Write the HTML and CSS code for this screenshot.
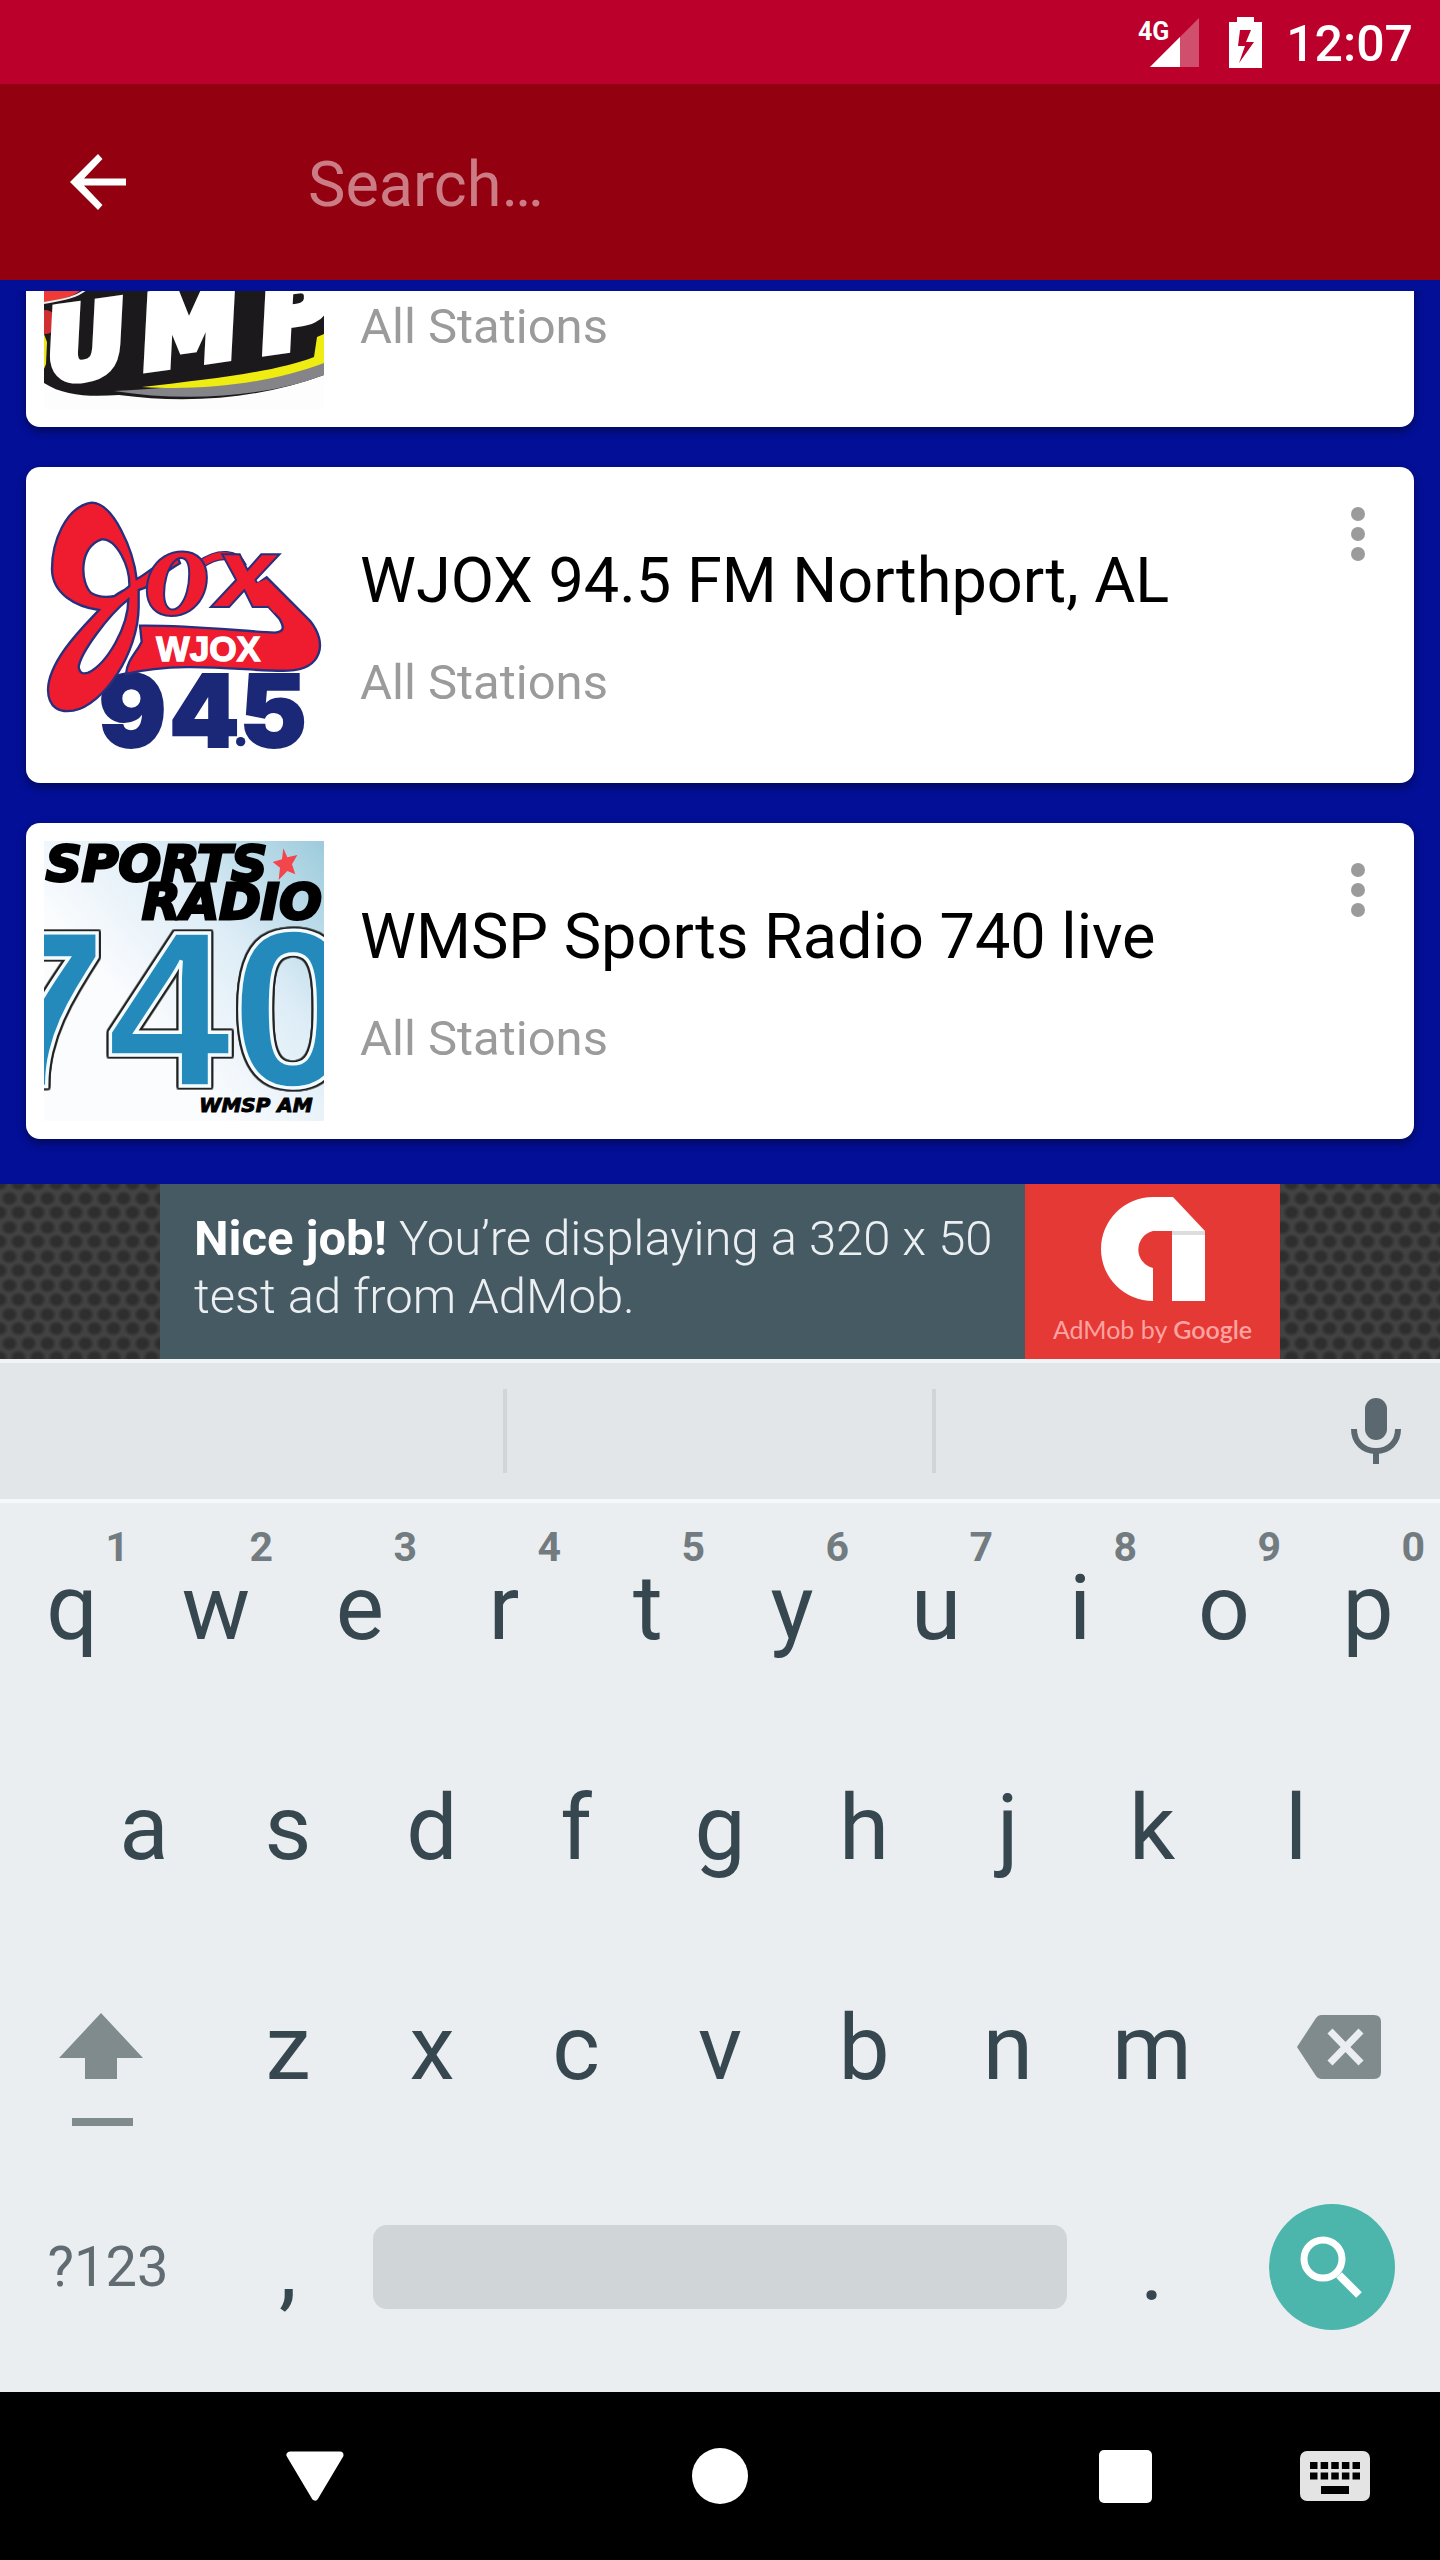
FILE: index.html
```html
<!DOCTYPE html>
<html lang="en">
<head>
  <meta charset="UTF-8">
  <meta name="viewport" content="width=device-width, initial-scale=1">
  <title>Search Stations</title>
  <link rel="stylesheet" href="styles.css">
</head>
<body>

  <!-- Status bar -->
  <div class="status-bar">
    <svg class="signal" viewBox="0 0 62 52" role="img" aria-label="4G signal">
      <path d="M12 51L61 2v49z" fill="#cf4f6d"/>
      <path d="M12 51L42 21v30z" fill="#fff"/>
      <text x="0" y="24" class="signal-text">4G</text>
    </svg>
    <svg class="battery" viewBox="0 0 33 51" role="img" aria-label="Charging">
      <path fill="#fff" fill-rule="evenodd" d="M8 0h17v5h8v46H0V5h8zM11 13L9 29h7l-6 17 15-21h-8l5-12z"/>
    </svg>
    <span class="clock">12:07</span>
  </div>

  <!-- Search toolbar -->
  <header class="toolbar">
    <button class="back" aria-label="Back">
      <svg width="56" height="56" viewBox="0 0 56 56">
        <path d="M56 24.500H14L32.500 5 28 0 0 28l28 28 4.500-5L14 31.500h42z" fill="#fff"/>
      </svg>
    </button>
    <input class="search-box" type="text" placeholder="Search…" aria-label="Search">
  </header>

  <!-- Station list -->
  <div class="list-wrap">
    <main class="station-list">
      <article class="card">
        <svg class="thumb" viewBox="0 0 280 280" role="img" aria-label="UMP">
          <rect width="280" height="280" fill="#fdfdfd"/>
          <path d="M0 120H280V246C220 268 150 276 75 266C45 268 20 267 0 254z" fill="#1b191c"/>
          <path d="M0 150H44C38 168 18 170 0 174z" fill="#ef3b35"/>
          <path d="M0 174C18 171 36 168 44 158" fill="none" stroke="#eee" stroke-width="2"/>
          <ellipse cx="1" cy="193" rx="12" ry="12" fill="#cf2f30"/>
          <path d="M0 205l3 8-1 22-2 5z" fill="#e9e617"/>
          <path d="M70 262C150 258 225 250 280 230v16C225 267 145 274 70 262z" fill="#858488"/>
          <path d="M98 258C170 250 235 242 270 228l3-20 7-3v29C225 255 155 262 98 258z" fill="#efec12"/>
          <g class="ump-text" transform="rotate(-8 10 256)">
            <text x="8 104 224" y="252">UMP</text>
          </g>
        </svg>
        <div class="card-text">
          <h2>UMP Radio</h2>
          <p>All Stations</p>
        </div>
        <button class="more" aria-label="More options"><i></i><i></i><i></i></button>
      </article>

      <article class="card">
        <svg class="thumb" viewBox="72 75 840 840" role="img" aria-label="WJOX 94.5">
          <g class="jox-number">
            <text x="236 448 660" y="860">945</text>
          </g>
          <circle cx="662" cy="845" r="14" fill="#1b2878"/>
          <g fill="#ee1c2e" fill-rule="evenodd" stroke="#26307f" stroke-width="7">
            <path d="M360 497C500 495 650 512 765 518C795 515 792 500 778 476L694 384L740 352L870 482C925 550 905 628 805 632C690 636 490 600 318 642C322 598 350 578 365 545z"/>
            <path d="M215 128C135 140 95 250 96 330C98 400 165 440 237 450C195 495 85 600 84 690C85 745 120 758 160 752C250 735 355 580 356 440L356 390C400 380 410 350 480 310L470 284C420 300 385 340 350 357C340 270 280 128 215 128z
                     M245 238C175 260 180 370 215 400C235 412 262 412 284 408C300 395 318 390 328 378C330 320 290 235 245 238z
                     M325 418C265 465 180 580 176 622C180 642 190 642 205 638C262 610 325 500 325 418z"/>
          </g>
          <!-- Bridge between the two script letters -->
          <path d="M668 320C650 282 600 272 540 314" fill="none" stroke="#26307f" stroke-width="28"/>
          <path d="M668 320C650 282 600 272 540 314" fill="none" stroke="#ee1c2e" stroke-width="21"/>
          <text class="jox-o" x="374" y="464">o</text>
          <text class="jox-x" x="584" y="440">x</text>
          <path d="M692 376L738 358L800 420L764 460z" fill="#ee1c2e"/>
          <text class="jox-banner" x="565" y="602" text-anchor="middle">WJOX</text>
        </svg>
        <div class="card-text">
          <h2>WJOX 94.5 FM Northport, AL</h2>
          <p>All Stations</p>
        </div>
        <button class="more" aria-label="More options"><i></i><i></i><i></i></button>
      </article>

      <article class="card">
        <svg class="thumb" viewBox="72 123 840 840" role="img" aria-label="Sports Radio 740 WMSP AM">
          <defs>
            <linearGradient id="sky" x1="1" y1="0" x2="0.3" y2="0.6">
              <stop offset="0" stop-color="#9ccbdc"/>
              <stop offset="0.5" stop-color="#dcecf6"/>
              <stop offset="1" stop-color="#fbfcfe"/>
            </linearGradient>
          </defs>
          <rect x="72" y="123" width="840" height="840" fill="url(#sky)"/>
          <g class="wmsp-head">
            <text x="742" y="242" text-anchor="end">SPORTS</text>
            <text x="366" y="356">RADIO</text>
          </g>
          <path d="M790 145l12 27 30-7-16 28 10 30-24-10-26 27 4-37-22-17 28-8z" fill="#f2464c"/>
          <text class="wmsp-number" x="-112" y="859">740</text>
          <text class="wmsp-foot" x="538" y="937">WMSP AM</text>
        </svg>
        <div class="card-text">
          <h2>WMSP Sports Radio 740 live</h2>
          <p>All Stations</p>
        </div>
        <button class="more" aria-label="More options"><i></i><i></i><i></i></button>
      </article>
    </main>
  </div>

  <!-- Ad banner -->
  <aside class="ad">
    <div class="ad-banner">
      <p class="ad-text"><b>Nice job!</b> You’re displaying a 320 x 50 test ad from AdMob.</p>
      <div class="ad-brand">
        <svg width="104" height="104" viewBox="0 0 104 104" aria-hidden="true">
          <path d="M52 0h20l32 34v70H71V34H52a19 19 0 0 0 0 37v33A52 52 0 0 1 52 0z" fill="#fff"/>
          <path d="M71 34h33v4H71z" fill="#ddd"/>
        </svg>
        <span>AdMob by <b>Google</b></span>
      </div>
    </div>
  </aside>

  <!-- Keyboard -->
  <section class="keyboard" aria-label="Keyboard">
    <div class="suggestions">
      <div></div>
      <div></div>
      <div class="mic-cell">
        <button class="mic" aria-label="Voice input">
          <svg width="50" height="66" viewBox="0 0 50 66">
            <rect x="14" width="22" height="42" rx="11" fill="#5b686f"/>
            <path d="M3 31c0 13 9 22 22 22s22-9 22-22M25 53v13" fill="none" stroke="#5b686f" stroke-width="6"/>
          </svg>
        </button>
      </div>
    </div>

    <div class="keys">
      <div class="key-row">
        <button class="key">q<small>1</small></button>
        <button class="key">w<small>2</small></button>
        <button class="key">e<small>3</small></button>
        <button class="key">r<small>4</small></button>
        <button class="key">t<small>5</small></button>
        <button class="key">y<small>6</small></button>
        <button class="key">u<small>7</small></button>
        <button class="key">i<small>8</small></button>
        <button class="key">o<small>9</small></button>
        <button class="key">p<small>0</small></button>
      </div>
      <div class="key-row key-row-inset">
        <button class="key">a</button>
        <button class="key">s</button>
        <button class="key">d</button>
        <button class="key">f</button>
        <button class="key">g</button>
        <button class="key">h</button>
        <button class="key">j</button>
        <button class="key">k</button>
        <button class="key">l</button>
      </div>
      <div class="key-row">
        <button class="key key-wide key-shift" aria-label="Shift">
          <svg width="84" height="160" viewBox="0 0 84 160">
            <path d="M42 46L84 91H58v21H26V91H0z" fill="#808b8e"/>
            <rect x="13" y="151" width="61" height="8" fill="#808b8e"/>
          </svg>
        </button>
        <button class="key">z</button>
        <button class="key">x</button>
        <button class="key">c</button>
        <button class="key">v</button>
        <button class="key">b</button>
        <button class="key">n</button>
        <button class="key">m</button>
        <button class="key key-wide key-delete" aria-label="Delete">
          <svg width="84" height="64" viewBox="0 0 84 64">
            <path d="M24 0h53q7 0 7 7v50q0 7-7 7H24q-3 0-5-3L0 32 19 3q2-3 5-3z" fill="#808b8e"/>
            <path d="M33 16l31 32M64 16L33 48" stroke="#ebeef1" stroke-width="7"/>
          </svg>
        </button>
      </div>
      <div class="key-row">
        <button class="key key-wide key-symbols">?123</button>
        <button class="key">,</button>
        <button class="key key-space" aria-label="Space"><span></span></button>
        <button class="key">.</button>
        <button class="key key-wide key-search" aria-label="Search">
          <svg width="126" height="126" viewBox="0 0 126 126">
            <circle cx="63" cy="63" r="63" fill="#4db6ac"/>
            <circle cx="54" cy="55" r="19" fill="none" stroke="#fff" stroke-width="7"/>
            <path d="M70 71l20 20" stroke="#fff" stroke-width="8"/>
          </svg>
        </button>
      </div>
    </div>
  </section>

  <!-- System navigation -->
  <nav class="nav-bar">
    <button class="nav-back" aria-label="Hide keyboard">
      <svg width="58" height="50" viewBox="0 0 58 50">
        <path d="M4 4h50L29 46z" fill="#fff" stroke="#fff" stroke-width="7" stroke-linejoin="round"/>
      </svg>
    </button>
    <button class="nav-home" aria-label="Home">
      <svg width="56" height="56" viewBox="0 0 56 56"><circle cx="28" cy="28" r="28" fill="#fff"/></svg>
    </button>
    <button class="nav-recent" aria-label="Recent apps">
      <svg width="53" height="53" viewBox="0 0 53 53"><rect width="53" height="53" rx="5" fill="#fff"/></svg>
    </button>
    <button class="nav-ime" aria-label="Switch keyboard">
      <svg width="70" height="50" viewBox="0 0 70 50">
        <rect width="70" height="50" rx="7" fill="#e4e4e4"/>
        <path d="M10 14.500h50M10 25h50" stroke="#000" stroke-width="7" stroke-dasharray="7.500 3.130"/>
        <path d="M21 39h28" stroke="#000" stroke-width="8"/>
      </svg>
    </button>
  </nav>

</body>
</html>
```
FILE: styles.css
```css
* {
  box-sizing: border-box;
}

/* Page */
body {
  margin: 0;
  height: 100vh;
  display: flex;
  flex-direction: column;
  font-family: Roboto, sans-serif;
  background: #030f96;
}
button {
  border: none;
  padding: 0;
  background: none;
  font: inherit;
  color: inherit;
  cursor: pointer;
}
svg {
  display: block;
}
h2, p {
  margin: 0;
}

/******************************************************
 * STATUS BAR
 ******************************************************/
.status-bar {
  flex: none;
  height: 84px;
  padding: 0 27px;
  display: flex;
  align-items: center;
  justify-content: flex-end;
  background: #bb002c;
  color: #fff;
}
.signal {
  width: 62px;
  height: 52px;
}
.signal-text {
  font-size: 25px;
  font-weight: 700;
  fill: #fff;
}
.battery {
  width: 33px;
  height: 51px;
  margin: 0 24px 0 29px;
}
.clock {
  font-size: 50px;
  font-weight: 500;
  line-height: 58px;
  padding-top: 4px;
}

/******************************************************
 * TOOLBAR
 ******************************************************/
.toolbar {
  flex: none;
  height: 196px;
  display: flex;
  align-items: center;
  background: #93000f;
}
.back {
  padding: 28px 70px;
}
.search-box {
  flex: 1;
  min-width: 0;
  margin-left: 112px;
  padding: 6px 0 0;
  border: none;
  outline: none;
  background: none;
  font: 63px/80px Roboto, sans-serif;
  color: #fff;
}
.search-box::placeholder {
  color: #cb7c84;
  opacity: 1;
}

/******************************************************
 * STATION LIST
 ******************************************************/
.list-wrap {
  flex: 1;
  min-height: 0;
  padding-top: 11px;
  display: flex;
}
/* Scrolled to the end, so the first card is cut by the top edge */
.station-list {
  flex: 1;
  display: flex;
  flex-direction: column;
  justify-content: flex-end;
  gap: 40px;
  padding: 0 26px 45px;
  overflow: hidden;
}
.card {
  flex: none;
  display: flex;
  align-items: flex-start;
  padding: 18px;
  border-radius: 14px;
  background: #fff;
  box-shadow: 0 4px 8px rgba(0, 0, 0, 0.4);
}
.thumb {
  flex: none;
  width: 280px;
  height: 280px;
}
.card-text {
  flex: 1;
  padding: 59px 0 0 36px;
}
.card-text h2 {
  font-size: 63px;
  font-weight: 400;
  line-height: 74px;
  color: #000;
}
.card-text p {
  margin-top: 36px;
  font-size: 49px;
  line-height: 58px;
  color: #9b9b9b;
}
.more {
  display: flex;
  flex-direction: column;
  gap: 6px;
  padding: 22px 31px;
}
.more i {
  width: 14px;
  height: 14px;
  border-radius: 50%;
  background: #9b9b9b;
}

/* Station logos */
.ump-text {
  font: italic 700 97px "DejaVu Sans", sans-serif;
  fill: #fff;
  stroke: #fff;
  stroke-width: 10px;
}
.jox-number {
  font: 900 300px Inter, sans-serif;
  fill: #1b2878;
  stroke: #1b2878;
  stroke-width: 6px;
}
.jox-o,
.jox-x {
  fill: #ee1c2e;
  stroke: #26307f;
  stroke-width: 6px;
}
.jox-o {
  font: italic 700 400px "Liberation Serif", serif;
}
.jox-x {
  font: italic 700 290px "DejaVu Sans", sans-serif;
}
.jox-banner {
  font: 700 106px "Liberation Sans", sans-serif;
  fill: #fff;
  stroke: #fff;
  stroke-width: 4px;
}
.wmsp-head {
  font: italic 700 150px "DejaVu Sans", sans-serif;
  stroke: #000;
  stroke-width: 9px;
}
/* White outline from the stroke, dark outline from the shadows */
.wmsp-number {
  font: 700 670px "Liberation Sans", sans-serif;
  fill: #238abb;
  stroke: #f3fbff;
  stroke-width: 10px;
  filter: drop-shadow(5px 0 0 #222) drop-shadow(-5px 0 0 #222) drop-shadow(0 5px 0 #222) drop-shadow(0 -5px 0 #222);
}
.wmsp-foot {
  font: italic 700 60px "DejaVu Sans", sans-serif;
  stroke: #000;
  stroke-width: 3px;
}

/******************************************************
 * AD BANNER
 ******************************************************/
.ad {
  flex: none;
  display: flex;
  justify-content: center;
  background-color: #424242;
  background-image:
    radial-gradient(ellipse 9px 8px at center, #2e2e2e 50%, transparent 100%),
    radial-gradient(ellipse 9px 8px at center, #2e2e2e 50%, transparent 100%);
  background-size: 19px 29px;
  background-position: 0 0, 9px 14px;
}
.ad-banner {
  width: 1120px;
  height: 175px;
  display: flex;
  background: #465a64;
}
.ad-text {
  flex: 1;
  padding: 26px 0 0 34px;
  font-size: 49px;
  font-weight: 300;
  line-height: 58px;
  color: #eceff1;
}
.ad-text b {
  font-weight: 700;
  color: #fff;
}
.ad-brand {
  width: 255px;
  padding-top: 13px;
  display: flex;
  flex-direction: column;
  align-items: center;
  gap: 12px;
  background: #e53935;
  color: #ffa3a0;
  font: 400 25px/32px Lato, sans-serif;
}
.ad-brand b {
  font-weight: 600;
}

/******************************************************
 * KEYBOARD
 ******************************************************/
.keyboard {
  flex: none;
  background: #ebeef1;
  color: #37474f;
}
.suggestions {
  height: 144px;
  display: grid;
  grid-template-columns: 507fr 429fr 504fr;
  align-items: center;
  background: #e2e6e9;
  border-top: 4px solid #f0f4f6;
  border-bottom: 4px solid #f5f8fa;
}
.suggestions div {
  height: 84px;
  border-right: 4px solid #d0d5d8;
}
.suggestions .mic-cell {
  border: none;
  display: flex;
  align-items: center;
  justify-content: flex-end;
  padding-right: 39px;
}
.keys {
  display: flex;
  flex-direction: column;
  gap: 12px;
  padding-bottom: 21px;
}
.key-row {
  display: flex;
  height: 208px;
}
.key-row-inset {
  padding: 0 5%;
}
.key {
  flex: 1;
  position: relative;
  display: flex;
  align-items: center;
  justify-content: center;
  padding-top: 2px;
  font-size: 91px;
  line-height: 106px;
}
.key small {
  position: absolute;
  top: 20px;
  right: 15px;
  font-size: 41px;
  font-weight: 700;
  line-height: 48px;
  color: #727c80;
}
.key-wide {
  flex: none;
  width: 15%;
  padding-top: 0;
}
.key-shift {
  padding-right: 14px;
}
.key-delete {
  padding-left: 14px;
}
.key-symbols {
  font-size: 56px;
  color: #606c72;
}
.key-space {
  flex: none;
  width: 50%;
  padding: 0 13px;
}
.key-space span {
  flex: 1;
  height: 84px;
  border-radius: 14px;
  background: #d0d5d8;
}

/******************************************************
 * NAVIGATION BAR
 ******************************************************/
.nav-bar {
  flex: none;
  height: 168px;
  display: grid;
  grid-template-columns: 210fr 210fr 195fr 210fr 195fr 210fr 210fr;
  background: #000;
}
.nav-bar button {
  display: flex;
  align-items: center;
  justify-content: center;
}
.nav-back {
  grid-column: 2;
}
.nav-home {
  grid-column: 4;
}
.nav-recent {
  grid-column: 6;
}
```
